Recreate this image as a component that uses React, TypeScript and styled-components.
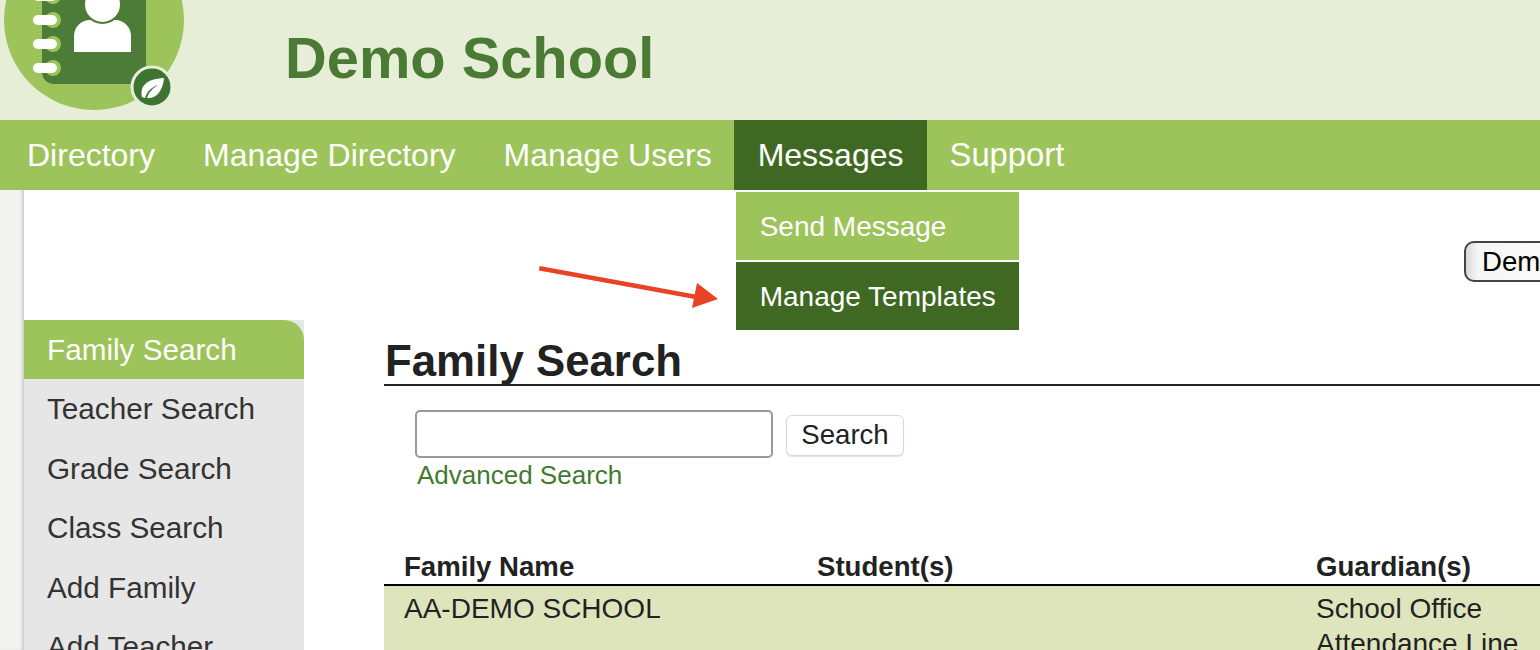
import styled, { createGlobalStyle } from "styled-components";

const GlobalStyle = createGlobalStyle`
  html, body {
    margin: 0;
    height: 650px;
    overflow: hidden;
    background: #fff;
    font-family: "Liberation Sans", Arial, sans-serif;
    color: #222;
  }
`;

const Page = styled.div`
  position: relative;
  width: 1540px;
  height: 650px;
  overflow: hidden;
`;

const Header = styled.header`
  display: flex;
  height: 120px;
  background: #e6eed8;
`;

const LogoWrap = styled.div`
  flex: 0 0 285px;
  height: 120px;
`;

const SchoolName = styled.h1`
  margin: 0;
  font-size: 57.8px;
  line-height: 116px;
  font-weight: 700;
  color: #4b7a35;
`;

const Nav = styled.nav`
  display: flex;
  height: 70px;
  padding-left: 3px;
  background: #9dc45a;
`;

const NavItem = styled.div<{ $active?: boolean; $left?: number; $right?: number; $size?: number }>`
  position: relative;
  padding: 0 ${({ $right }) => $right ?? 24}px 0 ${({ $left }) => $left ?? 24}px;
  font-size: ${({ $size }) => $size ?? 32}px;
  line-height: 70px;
  color: #fff;
  background: ${({ $active }) => ($active ? "#3f6923" : "transparent")};
`;

const Dropdown = styled.div`
  position: absolute;
  top: 72px;
  left: 2px;
  width: 283px;
  display: flex;
  flex-direction: column;
  gap: 2px;
  z-index: 2;
`;

const DropItem = styled.div<{ $active?: boolean }>`
  height: 68px;
  padding-left: 24px;
  font-size: 28px;
  line-height: 69px;
  color: #fff;
  background: ${({ $active }) => ($active ? "#3f6923" : "#9dc45a")};
`;

const Shell = styled.div`
  display: flex;
  height: 460px;
`;

const Strip = styled.div`
  flex: 0 0 24px;
  background: #f3f4f2;
  box-shadow: inset -3px 0 3px -1px rgba(0, 0, 0, 0.16);
`;

const Sidebar = styled.aside`
  flex: 0 0 280px;
  margin-top: 130px;
  background: #e6e6e6;
`;

const SideItem = styled.div<{ $active?: boolean }>`
  height: ${({ $active }) => ($active ? "59px" : "59.5px")};
  padding-left: 23px;
  font-size: 29.7px;
  line-height: 59px;
  color: ${({ $active }) => ($active ? "#fff" : "#333")};
  background: ${({ $active }) => ($active ? "#9dc45a" : "transparent")};
  border-top-right-radius: ${({ $active }) => ($active ? "20px" : "0")};
`;

const Content = styled.main`
  flex: 0 0 1300px;
  margin-left: 80px;
`;

const UserRow = styled.div`
  padding: 51px 0 0 1080px;
  height: 40px;
`;

const UserButton = styled.button`
  height: 41px;
  padding: 0 16px;
  border: 2px solid #444;
  border-radius: 10px;
  background: linear-gradient(90deg, #d9d9d9 0, #f6f6f6 12px, #fff 100%);
  font: 27.6px "Liberation Sans", Arial, sans-serif;
  color: #000;
  white-space: nowrap;
`;

const Title = styled.h2`
  margin: 54px 0 0;
  height: 49px;
  padding-left: 1px;
  font-size: 43.8px;
  line-height: 52px;
  font-weight: 700;
  color: #222;
  border-bottom: 2px solid #222;
`;

const SearchBlock = styled.div`
  padding: 24px 0 0 31px;
`;

const SearchRow = styled.div`
  display: flex;
  align-items: center;
  gap: 13px;
`;

const SearchInput = styled.input`
  box-sizing: border-box;
  width: 358px;
  height: 48px;
  border: 2px solid #999;
  border-radius: 5px;
  background: #fff;
`;

const SearchButton = styled.button`
  box-sizing: border-box;
  width: 118px;
  height: 41px;
  margin-top: 2px;
  padding: 0;
  border: 1px solid #d8d8d8;
  border-radius: 6px;
  background: #fff;
  box-shadow: 0 1px 1px rgba(0, 0, 0, 0.12);
  font: 27.6px "Liberation Sans", Arial, sans-serif;
  color: #222;
`;

const AdvancedLink = styled.a`
  display: block;
  margin: 1px 0 0 2px;
  font-size: 26px;
  line-height: 32px;
  color: #44792f;
`;

const TableHead = styled.div`
  display: grid;
  grid-template-columns: 413px 499px 1fr;
  margin-top: 58px;
  height: 35px;
  border-bottom: 2px solid #000;
  font-size: 27.6px;
  line-height: 36px;
  font-weight: 700;
`;

const TableRow = styled.div`
  display: grid;
  grid-template-columns: 413px 499px 1fr;
  box-sizing: border-box;
  height: 90px;
  padding-top: 5px;
  background: #dee5bc;
  font-size: 28px;
  line-height: 35px;
  color: #222;
`;

const Cell = styled.div`
  padding-left: 20px;
  white-space: nowrap;
`;

const Arrow = styled.svg`
  position: absolute;
  left: 530px;
  top: 255px;
  z-index: 3;
`;

function Logo() {
  return (
    <svg width="190" height="120" viewBox="0 0 190 120">
      <circle cx="94" cy="20" r="90" fill="#9dc45a" />
      <rect x="42" y="-30" width="104" height="114" rx="12" fill="#4d7c38" />
      <path d="M74 52V36c0-9 7-16 16-16h25c9 0 16 7 16 16v16z" fill="#fff" />
      <circle cx="102.5" cy="4.5" r="18.5" fill="#fff" stroke="#4d7c38" strokeWidth="2" />
      {[-4, 20, 44, 68].map((y) => (
        <g key={y}>
          <circle cx="53" cy={y} r="8" fill="#9dc45a" />
          <rect x="33" y={y - 5} width="24" height="10" rx="5" fill="#fff" />
        </g>
      ))}
      <circle cx="152" cy="87" r="20" fill="#3f7430" stroke="#e6eed8" strokeWidth="3" />
      <path d="M142 97c-2-10 3-18 22-19-1 12-7 21-17 20 2-6 6-10 11-13-6 2-11 6-13 13z" fill="#fff" />
    </svg>
  );
}

export default function App() {
  return (
    <Page>
      <GlobalStyle />
      <Header>
        <LogoWrap>
          <Logo />
        </LogoWrap>
        <SchoolName>Demo School</SchoolName>
      </Header>
      <Nav>
        <NavItem>Directory</NavItem>
        <NavItem>Manage Directory</NavItem>
        <NavItem $right={22}>Manage Users</NavItem>
        <NavItem $active $right={23}>
          Messages
          <Dropdown>
            <DropItem>Send Message</DropItem>
            <DropItem $active>Manage Templates</DropItem>
          </Dropdown>
        </NavItem>
        <NavItem $left={23} $size={32.8}>Support</NavItem>
      </Nav>
      <Shell>
        <Strip />
        <Sidebar>
          <SideItem $active>Family Search</SideItem>
          <SideItem>Teacher Search</SideItem>
          <SideItem>Grade Search</SideItem>
          <SideItem>Class Search</SideItem>
          <SideItem>Add Family</SideItem>
          <SideItem>Add Teacher</SideItem>
        </Sidebar>
        <Content>
          <UserRow>
            <UserButton>Demo User</UserButton>
          </UserRow>
          <Title>Family Search</Title>
          <SearchBlock>
            <SearchRow>
              <SearchInput />
              <SearchButton>Search</SearchButton>
            </SearchRow>
            <AdvancedLink>Advanced Search</AdvancedLink>
          </SearchBlock>
          <TableHead>
            <Cell>Family Name</Cell>
            <Cell>Student(s)</Cell>
            <Cell>Guardian(s)</Cell>
          </TableHead>
          <TableRow>
            <Cell>AA-DEMO SCHOOL</Cell>
            <Cell />
            <Cell>
              School Office
              <br />
              Attendance Line
            </Cell>
          </TableRow>
        </Content>
      </Shell>
      <Arrow width="200" height="60" viewBox="0 0 200 60">
        <path d="M9.3 13.3L165 41.7" stroke="#e94225" strokeWidth="4.5" fill="none" />
        <path d="M167 28L162 53 188 44z" fill="#e94225" />
      </Arrow>
    </Page>
  );
}
